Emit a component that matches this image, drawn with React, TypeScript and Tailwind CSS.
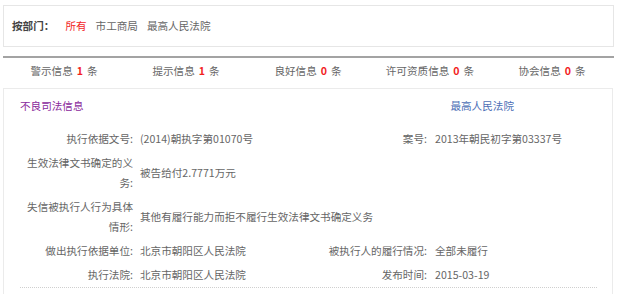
import React from "react";

const font = { fontFamily: '"Noto Sans CJK SC", "Noto Sans", sans-serif' };

function Tab({ label, n }: { label: string; n: number }) {
  return (
    <div className="flex items-center justify-center text-[#666]">
      <span>{label}</span>
      <span className="mx-[4px] font-bold text-[#f21f1f]">{n}</span>
      <span>条</span>
    </div>
  );
}

export default function App() {
  return (
    <div
      className="w-[624px] bg-white pb-10 text-[10.6px] leading-[20px] text-[#666]"
      style={font}
    >
      {/* department filter */}
      <div className="mx-[3px] mt-[5px] flex h-[42px] w-[611px] items-center border border-[#e6e6e6] pl-[8px]">
        <span className="font-bold text-[#444]">按部门：</span>
        <span className="ml-[11px] text-[#f21f1f]">所有</span>
        <span className="ml-[9px] text-[#666]">市工商局</span>
        <span className="ml-[9px] text-[#666]">最高人民法院</span>
      </div>

      {/* divider */}
      <div className="mx-[3px] mt-[9px] h-[2px] w-[611px] bg-[#a3a3a3]" />

      {/* tabs */}
      <div className="mx-[3px] grid h-[26px] w-[610px] grid-cols-5 items-center">
        <Tab label="警示信息" n={1} />
        <Tab label="提示信息" n={1} />
        <Tab label="良好信息" n={0} />
        <Tab label="许可资质信息" n={0} />
        <Tab label="协会信息" n={0} />
      </div>

      {/* record box */}
      <div className="mx-[3px] mt-[4px] w-[610px] border border-[#ebebeb] px-[16px] pt-[7px] pb-10">
        <div className="flex h-[20px] items-center justify-between">
          <span className="text-[#8a2a9c]">不良司法信息</span>
          <span className="mr-[82px] text-[#4d6fb6]">最高人民法院</span>
        </div>

        <div className="mt-[11px] grid w-[577px] grid-cols-[120px_177px_118px_1fr] border-b border-dotted border-[#cfcfcf]">
          {/* row 1 */}
          <div className="flex items-center justify-end py-[2px] pr-[7px] text-right">执行依据文号:</div>
          <div className="flex items-center py-[2px]">(2014)朝执字第01070号</div>
          <div className="flex items-center justify-end py-[2px] pr-[8px] text-right">案号:</div>
          <div className="flex items-center py-[2px]">2013年朝民初字第03337号</div>

          {/* row 2 */}
          <div className="flex items-center justify-end py-[2px] pr-[7px] text-right">生效法律文书确定的义务:</div>
          <div className="col-span-3 flex items-center py-[2px]">被告给付2.7771万元</div>

          {/* row 3 */}
          <div className="flex items-center justify-end py-[2px] pr-[7px] text-right">失信被执行人行为具体情形:</div>
          <div className="col-span-3 flex items-center py-[2px]">其他有履行能力而拒不履行生效法律文书确定义务</div>

          {/* row 4 */}
          <div className="flex items-center justify-end py-[2px] pr-[7px] text-right">做出执行依据单位:</div>
          <div className="flex items-center py-[2px]">北京市朝阳区人民法院</div>
          <div className="flex items-center justify-end py-[2px] pr-[8px] text-right">被执行人的履行情况:</div>
          <div className="flex items-center py-[2px]">全部未履行</div>

          {/* row 5 */}
          <div className="flex items-center justify-end py-[2px] pr-[7px] text-right">执行法院:</div>
          <div className="flex items-center py-[2px]">北京市朝阳区人民法院</div>
          <div className="flex items-center justify-end py-[2px] pr-[8px] text-right">发布时间:</div>
          <div className="flex items-center py-[2px]">2015-03-19</div>
        </div>
      </div>
    </div>
  );
}
